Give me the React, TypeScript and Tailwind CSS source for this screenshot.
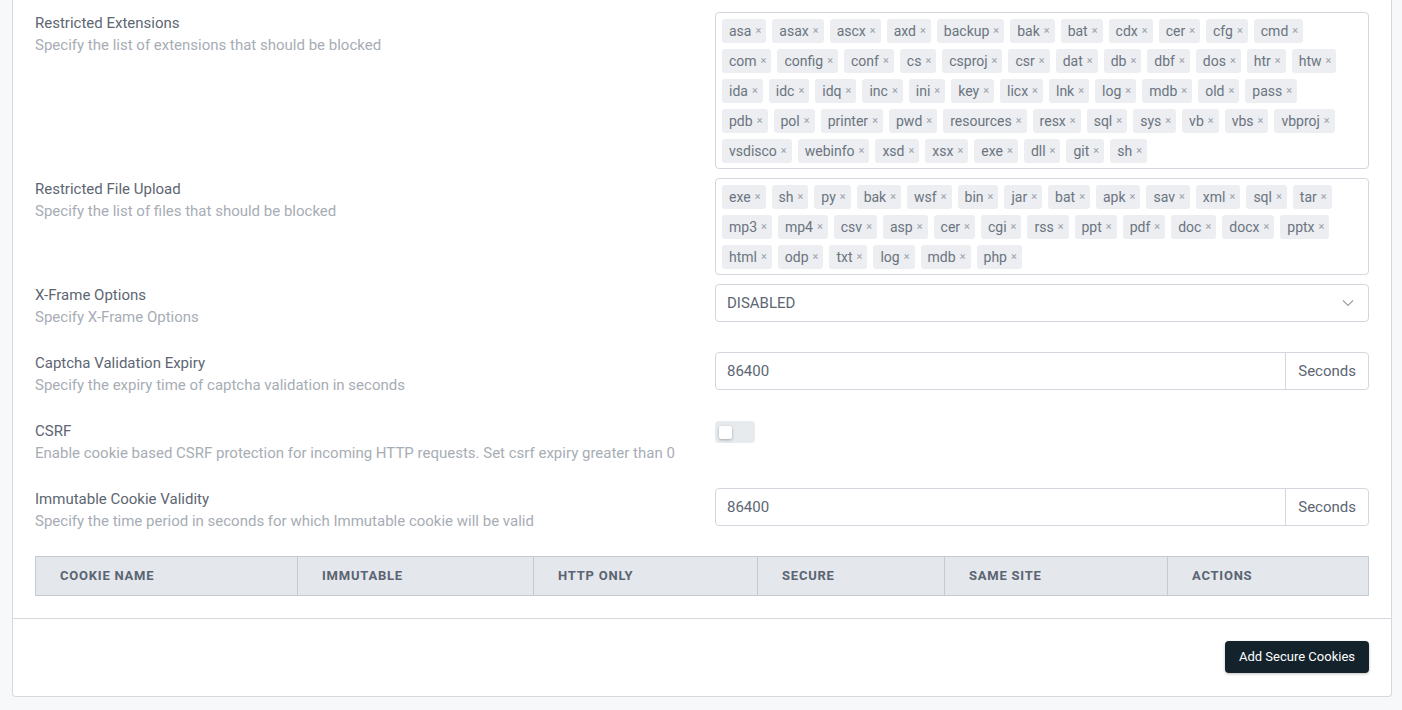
import React from "react";

const ext = ["asa","asax","ascx","axd","backup","bak","bat","cdx","cer","cfg","cmd","com","config","conf","cs","csproj","csr","dat","db","dbf","dos","htr","htw","ida","idc","idq","inc","ini","key","licx","lnk","log","mdb","old","pass","pdb","pol","printer","pwd","resources","resx","sql","sys","vb","vbs","vbproj","vsdisco","webinfo","xsd","xsx","exe","dll","git","sh"];
const files = ["exe","sh","py","bak","wsf","bin","jar","bat","apk","sav","xml","sql","tar","mp3","mp4","csv","asp","cer","cgi","rss","ppt","pdf","doc","docx","pptx","html","odp","txt","log","mdb","php"];

function Tags({ items }: { items: string[] }) {
  return (
    <div className="flex flex-wrap gap-[6px] rounded-[4px] border border-[#d3d7dd] bg-white pb-[5px] pl-[6px] pr-[24px] pt-[6px]">
      {items.map((t, i) => (
        <span key={i} className="flex h-[24px] items-center gap-[4px] rounded-[3px] bg-[#eceef1] pl-[7px] pr-[5px] text-[14px] text-[#6b7480]">
          <span>{t}</span>
          <span className="text-[11px] text-[#9aa1aa]">×</span>
        </span>
      ))}
    </div>
  );
}

function Label({ title, desc }: { title: string; desc: string }) {
  return (
    <div className="mb-[24px]">
      <div className="text-[15px] leading-[22px] text-[#5d6672]">{title}</div>
      <div className="text-[15px] leading-[22px] text-[#a7adb5]">{desc}</div>
    </div>
  );
}

function Row({ title, desc, children }: { title: string; desc: string; children: React.ReactNode }) {
  return (
    <div className="grid grid-cols-[653px_1fr] items-start gap-x-[27px]">
      <Label title={title} desc={desc} />
      <div className="mb-[9px]">{children}</div>
    </div>
  );
}

function NumInput() {
  return (
    <div className="flex h-[38px] rounded-[4px] border border-[#d3d7dd] bg-white text-[15px] text-[#5d6672]">
      <div className="flex flex-1 items-center pl-[11px]">86400</div>
      <div className="flex items-center border-l border-[#d3d7dd] px-[12px]">Seconds</div>
    </div>
  );
}

export default function App() {
  const cols = [
    ["COOKIE NAME", "w-[261px]"],
    ["IMMUTABLE", "w-[236px]"],
    ["HTTP ONLY", "w-[224px]"],
    ["SECURE", "w-[187px]"],
    ["SAME SITE", "w-[223px]"],
    ["ACTIONS", "flex-1"],
  ];
  return (
    <div className="min-h-[710px] bg-[#f7f8fa] pb-[13px] pl-[12px] pr-[10px]" style={{ fontFamily: "Roboto, 'Noto Sans', sans-serif" }}>
      <div className="rounded-b-[4px] border-x border-b border-[#d5d9de] bg-white">
        <div className="px-[22px] pt-[12px]">
          <Row title="Restricted Extensions" desc="Specify the list of extensions that should be blocked">
            <Tags items={ext} />
          </Row>
          <Row title="Restricted File Upload" desc="Specify the list of files that should be blocked">
            <Tags items={files} />
          </Row>
          <Row title="X-Frame Options" desc="Specify X-Frame Options">
            <div className="flex h-[38px] items-center justify-between rounded-[4px] border border-[#d3d7dd] bg-white pl-[11px] pr-[14px] text-[15px] text-[#5d6672]">
              <span>DISABLED</span>
              <svg width="12" height="8" viewBox="0 0 12 8" fill="none" stroke="#9aa1aa" strokeWidth="1.2">
                <path d="M1 1.5l5 5 5-5" />
              </svg>
            </div>
          </Row>
          <Row title="Captcha Validation Expiry" desc="Specify the expiry time of captcha validation in seconds">
            <NumInput />
          </Row>
          <Row title="CSRF" desc="Enable cookie based CSRF protection for incoming HTTP requests. Set csrf expiry greater than 0">
            <div className="mt-[1px] flex h-[22px] w-[40px] items-center rounded-[4px] bg-[#e8ebee] pl-[4px]">
              <div className="h-[13px] w-[13px] rounded-[2px] bg-white shadow-[0_1px_3px_rgba(0,0,0,0.3)]" />
            </div>
          </Row>
          <Row title="Immutable Cookie Validity" desc="Specify the time period in seconds for which Immutable cookie will be valid">
            <NumInput />
          </Row>
          <div className="flex h-[40px] border border-[#c5cbd3] bg-[#e4e7eb]">
            {cols.map(([c, w], i) => (
              <div key={c} className={`${w} flex items-center pl-[24px] text-[13px] font-bold tracking-[0.06em] text-[#5a6472] ${i > 0 ? "border-l border-[#c5cbd3]" : ""}`}>
                {c}
              </div>
            ))}
          </div>
          <div className="h-[22px]" />
        </div>
        <div className="flex justify-end border-t border-[#d5d9de] px-[22px] pb-[23px] pt-[22px]">
          <button className="h-[32px] rounded-[4px] bg-[#13222b] px-[14px] text-[13px] text-white shadow-[0_1px_3px_rgba(0,0,0,0.25)]">
            Add Secure Cookies
          </button>
        </div>
      </div>
    </div>
  );
}
